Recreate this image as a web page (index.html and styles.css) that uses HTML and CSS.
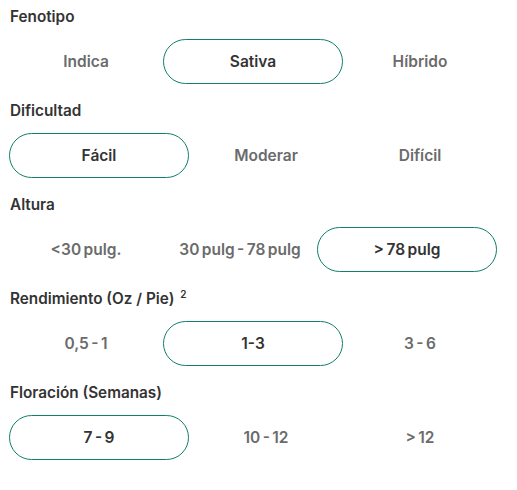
FILE: index.html
```html
<!DOCTYPE html>
<html lang="es">
<head>
    <meta charset="UTF-8">
    <meta name="viewport" content="width=device-width, initial-scale=1.0">
    <title>Filtros</title>
    <link rel="stylesheet" href="styles.css">
</head>
<body>

    <!-- Fenotipo -->
    <section class="filter">
        <h3 class="filter-title">Fenotipo</h3>
        <div class="options">
            <button class="option">Indica</button>
            <button class="option active">Sativa</button>
            <button class="option">Híbrido</button>
        </div>
    </section>

    <!-- Dificultad -->
    <section class="filter">
        <h3 class="filter-title">Dificultad</h3>
        <div class="options">
            <button class="option active">Fácil</button>
            <button class="option">Moderar</button>
            <button class="option">Difícil</button>
        </div>
    </section>

    <!-- Altura -->
    <section class="filter">
        <h3 class="filter-title">Altura</h3>
        <div class="options">
            <button class="option">&lt;30 pulg.</button>
            <button class="option">30 pulg - 78 pulg</button>
            <button class="option active">&gt; 78 pulg</button>
        </div>
    </section>

    <!-- Rendimiento -->
    <section class="filter">
        <h3 class="filter-title">Rendimiento (Oz / Pie) <sup>2</sup></h3>
        <div class="options">
            <button class="option">0,5 - 1</button>
            <button class="option active">1-3</button>
            <button class="option">3 - 6</button>
        </div>
    </section>

    <!-- Floración -->
    <section class="filter">
        <h3 class="filter-title">Floración (Semanas)</h3>
        <div class="options">
            <button class="option active">7 - 9</button>
            <button class="option">10 - 12</button>
            <button class="option">&gt; 12</button>
        </div>
    </section>

</body>
</html>
```

FILE: styles.css
```css
/* Reset */
* {
    margin: 0;
    padding: 0;
    box-sizing: border-box;
    font-family: 'Inter', 'Roboto', sans-serif;
}

body {
    background: #ffffff;
    padding: 5px 20px 6px 9px;
}

/* Filter group */
.filter {
    margin-bottom: 15px;
}

.filter-title {
    font-size: 15.3px;
    line-height: 24px;
    font-weight: 600;
    color: #333333;
    margin-bottom: 10px;
    padding-left: 1px;
}

.filter-title sup {
    font-size: 10px;
    vertical-align: 6px;
    line-height: 0;
    margin-left: 2px;
}

/* Options row: active pill is wider, the rest share what is left */
.options {
    display: flex;
}

.option {
    flex: 1 1 0;
    height: 45px;
    border: 1px solid transparent;
    border-radius: 23px;
    background: none;
    font-size: 15.5px;
    font-weight: 600;
    word-spacing: -1.5px;
    color: #6b6b6b;
    cursor: pointer;
}

.option.active {
    flex: 0 0 180px;
    border-color: #10806a;
    color: #333333;
}
```
